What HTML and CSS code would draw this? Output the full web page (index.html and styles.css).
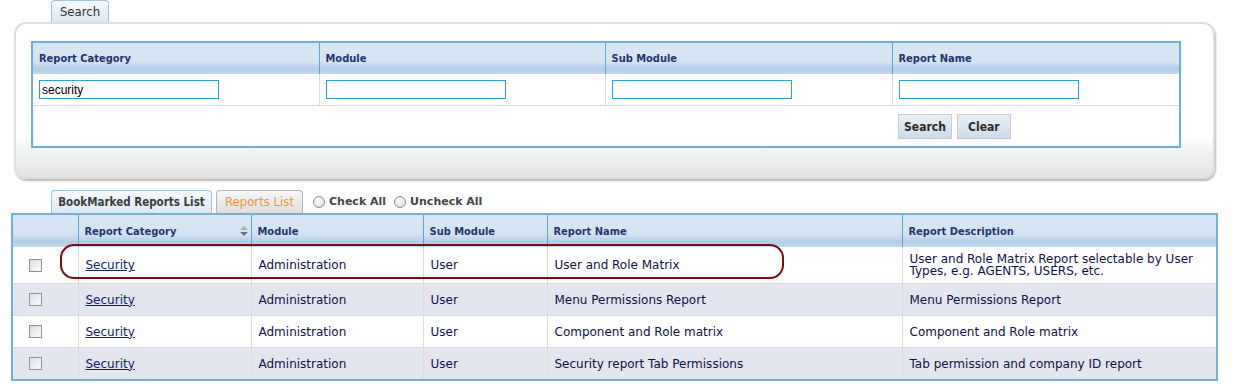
FILE: index.html
```html
<!DOCTYPE html>
<html lang="en">
<head>
    <meta charset="UTF-8">
    <title>Reports</title>
    <link rel="stylesheet" href="styles.css">
</head>
<body>
    <div class="tab-row search-tabs">
        <div class="tab tab-blue tab-search">Search</div>
    </div>
    <div class="search-panel">
        <table class="search-table">
            <colgroup>
                <col style="width:287px">
                <col style="width:286px">
                <col style="width:287px">
                <col>
            </colgroup>
            <tr class="head">
                <th>Report Category</th>
                <th>Module</th>
                <th>Sub Module</th>
                <th>Report Name</th>
            </tr>
            <tr class="inputs">
                <td><input type="text" class="field" value="security"></td>
                <td><input type="text" class="field"></td>
                <td><input type="text" class="field"></td>
                <td><input type="text" class="field"></td>
            </tr>
            <tr class="actions">
                <td colspan="3"></td>
                <td>
                    <button class="btn">Search</button>
                    <button class="btn">Clear</button>
                </td>
            </tr>
        </table>
    </div>

    <div class="tab-row list-tabs">
        <div class="tab tab-blue tab-bookmarked">BookMarked Reports List</div>
        <div class="tab tab-grey tab-reports">Reports List</div>
        <label class="radio"><span class="radio-dot"></span>Check All</label>
        <label class="radio"><span class="radio-dot"></span>Uncheck All</label>
    </div>

    <div class="list-wrap">
        <table class="list-table">
            <colgroup>
                <col style="width:66px">
                <col style="width:173px">
                <col style="width:172px">
                <col style="width:124px">
                <col style="width:355px">
                <col>
            </colgroup>
            <tr class="head">
                <th></th>
                <th>Report Category<span class="sort"></span></th>
                <th>Module</th>
                <th>Sub Module</th>
                <th>Report Name</th>
                <th>Report Description</th>
            </tr>
            <tr class="row first">
                <td class="chk"><span class="box"></span></td>
                <td><a href="#">Security</a></td>
                <td>Administration</td>
                <td>User</td>
                <td>User and Role Matrix</td>
                <td class="desc">User and Role Matrix Report selectable by User Types, e.g. AGENTS, USERS, etc.</td>
            </tr>
            <tr class="row alt">
                <td class="chk"><span class="box"></span></td>
                <td><a href="#">Security</a></td>
                <td>Administration</td>
                <td>User</td>
                <td>Menu Permissions Report</td>
                <td>Menu Permissions Report</td>
            </tr>
            <tr class="row">
                <td class="chk"><span class="box"></span></td>
                <td><a href="#">Security</a></td>
                <td>Administration</td>
                <td>User</td>
                <td>Component and Role matrix</td>
                <td>Component and Role matrix</td>
            </tr>
            <tr class="row alt">
                <td class="chk"><span class="box"></span></td>
                <td><a href="#">Security</a></td>
                <td>Administration</td>
                <td>User</td>
                <td>Security report Tab Permissions</td>
                <td>Tab permission and company ID report</td>
            </tr>
        </table>
        <div class="highlight"></div>
    </div>
</body>
</html>
```

FILE: styles.css
```css
body {
    margin: 0;
    font-family: "DejaVu Sans", Verdana, sans-serif;
    font-size: 12px;
    color: #10104a;
    background: #fff;
}

/* tabs */
.tab-row {
    display: flex;
    align-items: flex-end;
}
.search-tabs {
    margin-left: 51px;
    height: 22px;
}
.list-tabs {
    margin: 11px 0 0 51px;
    height: 23px;
}
.tab {
    box-sizing: border-box;
    height: 23px;
    border: 1px solid #9fc3df;
    border-bottom: none;
    border-radius: 4px 4px 0 0;
    font-family: "DejaVu Sans Condensed", "DejaVu Sans", sans-serif;
    font-size: 12px;
    font-weight: bold;
    line-height: 22px;
    text-align: center;
}
.tab-blue {
    background: linear-gradient(#f6fafd, #dbe9f5);
    color: #3c3c3c;
}
.tab-grey {
    background: linear-gradient(#f7f7f7, #dedede);
    border-color: #b4b4b4;
    color: #f7941d;
    font-weight: normal;
}
.tab-search {
    width: 58px;
    height: 22px;
    line-height: 21px;
    font-weight: normal;
    font-size: 13px;
    color: #333;
}
.tab-bookmarked {
    width: 161px;
    font-size: 11.5px;
}
.tab-reports {
    width: 87px;
    margin-left: 4px;
    font-size: 13px;
}
.radio {
    display: flex;
    align-items: center;
    height: 23px;
    margin-left: 10px;
    font-weight: bold;
    font-size: 11px;
    color: #444;
}
.radio + .radio {
    margin-left: 8px;
}
.radio-dot {
    width: 10px;
    height: 10px;
    margin-right: 4px;
    border: 1px solid #8e8e8e;
    border-radius: 50%;
    background: radial-gradient(circle at 40% 35%, #fff, #d8d8d8);
}

/* search panel */
.search-panel {
    box-sizing: border-box;
    width: 1201px;
    height: 157px;
    margin-left: 14px;
    padding: 17px 32px 0 15px;
    border: 2px solid #dedede;
    border-radius: 12px;
    background: linear-gradient(#fff 0, #fff 112px, #f3f4f5 125px, #e2e4e6 100%);
    box-shadow: 1px 2px 2px #b8b8b8;
}
.search-table,
.list-table {
    border-collapse: collapse;
    table-layout: fixed;
}
.search-table {
    width: 1150px;
    border: 2px solid #6cb0d9;
    background: #fff;
}
.head th {
    height: 31px;
    padding: 0 6px;
    border-left: 1px solid #5aaad3;
    background: linear-gradient(#d8e6f4 0, #d4e3f3 60%, #b2cde8 84%, #c4d9ee 100%);
    font-family: "DejaVu Sans Condensed", "DejaVu Sans", sans-serif;
    font-size: 11px;
    font-weight: bold;
    color: #1e356f;
    text-align: left;
    vertical-align: middle;
}
.head th:first-child {
    border-left: none;
}
.inputs td {
    height: 31px;
    padding: 0 6px;
    border-left: 1px solid #dcdcdc;
    border-bottom: 1px solid #dcdcdc;
}
.inputs td:first-child {
    border-left: none;
}
.field {
    box-sizing: border-box;
    display: block;
    width: 180px;
    height: 19px;
    margin: 0;
    padding: 0 2px;
    border: 1px solid #2b9fd6;
    font-family: "Liberation Sans", Arial, sans-serif;
    font-size: 12px;
    color: #000;
}
.actions td {
    height: 39px;
    padding: 1px 6px 0;
}
.btn {
    box-sizing: border-box;
    width: 54px;
    height: 25px;
    margin: 0 1px 0 0;
    padding: 0;
    border: 1px solid #c6cdd4;
    background: linear-gradient(#eaf0f5, #cddbe8);
    font-family: "DejaVu Sans Condensed", "DejaVu Sans", sans-serif;
    font-size: 12px;
    font-weight: bold;
    color: #2a2a2a;
}

/* report list */
.list-wrap {
    position: relative;
    margin-left: 11px;
    width: 1207px;
}
.list-table {
    width: 1207px;
    border: 2px solid #72b0da;
}
.list-table .head th {
    height: 32px;
    position: relative;
}
.sort {
    position: absolute;
    right: 3px;
    top: 11px;
    width: 0;
    height: 0;
    border-left: 4px solid transparent;
    border-right: 4px solid transparent;
    border-bottom: 4px solid #a9b3bd;
}
.sort::after {
    content: "";
    position: absolute;
    left: -4px;
    top: 6px;
    border-left: 4px solid transparent;
    border-right: 4px solid transparent;
    border-top: 4px solid #6c757d;
}
.row td {
    height: 31px;
    padding: 0 6px 0 7px;
    border-left: 1px solid #dcdcdc;
    border-top: 1px solid #dcdcdc;
    background: #fff;
    line-height: 12px;
    vertical-align: middle;
}
.row td:first-child {
    border-left: none;
}
.row.first td {
    height: 36px;
    border-top: none;
}
.row.alt td {
    background: #e3e5ef;
}
.row a {
    color: #10226a;
    text-decoration: underline;
}
.chk {
    text-align: center;
}
.box {
    display: inline-block;
    width: 11px;
    height: 11px;
    margin-left: -21px;
    border: 1px solid #939393;
    background: linear-gradient(135deg, #d8dde4, #fdfdfd);
    vertical-align: middle;
}
.desc {
    line-height: 11px;
}
.highlight {
    position: absolute;
    left: 49px;
    top: 31px;
    width: 720px;
    height: 31px;
    border: 2px solid #7a0e12;
    border-radius: 14px;
}
```
